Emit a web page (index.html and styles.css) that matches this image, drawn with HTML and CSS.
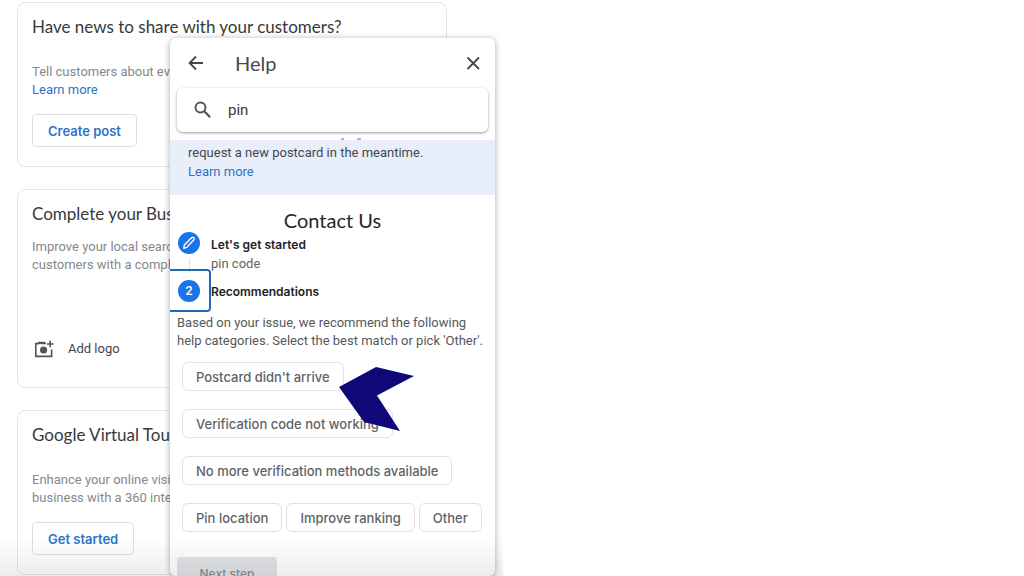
FILE: index.html
```html
<!DOCTYPE html>
<html lang="en">
<head>
<meta charset="utf-8">
<meta name="viewport" content="width=device-width, initial-scale=1">
<title>Business Profile Help</title>
<link rel="stylesheet" href="styles.css">
</head>
<body>
<div class="screen">
  <main class="cards">
    <section class="card card-news">
      <h2 class="card-title">Have news to share with your customers?</h2>
      <p class="card-text">Tell customers about eve<br><a class="link" href="#">Learn more</a></p>
      <button class="btn" type="button">Create post</button>
    </section>
    <section class="card card-profile">
      <h2 class="card-title">Complete your Bus</h2>
      <p class="card-text">Improve your local searc<br>customers with a comple</p>
      <button class="add-logo" type="button">
        <svg width="20" height="18" viewBox="0 0 20 18" fill="none" stroke="#505357" stroke-width="1.6" aria-hidden="true">
          <path d="M12 3.4H7.2L5.6 2.6 4.6 3.6H1.8v12.8h15.8V9.5"/><path d="M4 2.8h7" stroke-width="2"/>
          <circle cx="9.6" cy="10" r="3.6" fill="#505357" stroke="none"/>
          <path d="M16.2.8v6.4M13 4h6.4"/>
        </svg>
        Add logo
      </button>
    </section>
    <section class="card card-tour">
      <h2 class="card-title">Google Virtual Tour</h2>
      <p class="card-text">Enhance your online visib<br>business with a 360 inter</p>
      <button class="btn" type="button">Get started</button>
    </section>
  </main>

  <aside class="help">
    <header class="help-head">
      <button class="icon-btn" type="button" aria-label="Back">
        <svg width="16" height="16" viewBox="0 0 16 16" fill="none" stroke="#444746" stroke-width="1.8"><path d="M15 8H2M8 1.500 1.600 8 8 14.500"/></svg>
      </button>
      <h1 class="help-title">Help</h1>
      <button class="icon-btn" type="button" aria-label="Close">
        <svg width="16" height="16" viewBox="0 0 16 16" fill="none" stroke="#444746" stroke-width="1.8"><path d="m2.500 2.500 11.500 11.500M14 2.500 2.500 14"/></svg>
      </button>
    </header>
    <label class="search">
      <svg width="18" height="18" viewBox="0 0 18 18" fill="none" stroke="#505357" aria-hidden="true"><circle cx="6.500" cy="6.500" r="5" stroke-width="1.900"/><path d="m10.200 10.200 6 6" stroke-width="2.200"/></svg>
      <input class="search-input" type="text" value="pin" aria-label="Search help">
    </label>
    <div class="notice">
      <svg class="notice-edge" width="24" height="2" viewBox="0 0 24 2" fill="none" stroke="#6a6e74" aria-hidden="true"><path d="M1 1h3M17 1h4"/></svg>
      <p class="notice-text">request a new postcard in the meantime.<br><a class="link" href="#">Learn more</a></p>
    </div>
    <div class="contact">
      <h2 class="contact-title">Contact Us</h2>
      <ol class="steps">
        <li class="step">
          <span class="rail"><span class="dot"><svg width="22" height="22" viewBox="0 0 22 22" fill="none" stroke="#fff" stroke-width="1.4" stroke-linejoin="round" aria-hidden="true"><path d="m5.800 16.200.5-3.200 7.500-7.400q1-.8 2 .1.9 1 .1 2L8.800 15.400Z"/></svg></span></span>
          <span class="step-body"><strong class="step-name">Let's get started</strong><span class="step-note">pin code</span></span>
        </li>
        <li class="step">
          <span class="rail rail-focus"><span class="dot">2</span></span>
          <span class="step-body"><strong class="step-name">Recommendations</strong></span>
        </li>
      </ol>
      <p class="intro">Based on your issue, we recommend the following<br>help categories. Select the best match or pick 'Other'.</p>
      <div class="chips">
        <div class="chip-row"><button class="chip" type="button">Postcard didn't arrive</button></div>
        <div class="chip-row"><button class="chip" type="button">Verification code not working</button></div>
        <div class="chip-row"><button class="chip" type="button">No more verification methods available</button></div>
        <div class="chip-row"><button class="chip" type="button">Pin location</button><button class="chip" type="button">Improve ranking</button><button class="chip" type="button">Other</button></div>
      </div>
      <button class="next" type="button" disabled>Next step</button>
    </div>
  </aside>
  <svg class="pointer" width="76" height="66" viewBox="0 0 76 66" aria-hidden="true"><path d="M0 21 37 1l38 9-37 19.500L61 65l-36-9Z" fill="#100878"/></svg>
  <div class="fade"></div>
</div>
</body>
</html>
```
FILE: styles.css
```css
* { box-sizing: border-box; }
body {
  margin: 0;
  background: #fff;
  font: 13px/18px Roboto, "Liberation Sans", sans-serif;
  color: #5f6368;
}
h1, h2, p, ol { margin: 0; padding: 0; }
button, input { font: inherit; color: inherit; }
button { padding: 0; border: 0; background: none; }
.link { color: #2c73c9; text-decoration: none; }
.screen {
  position: relative;
  width: 49.1%;
  min-width: 503px;
  height: 100vh;
  overflow: hidden;
}
.cards {
  display: flex;
  flex-direction: column;
  gap: 22px;
  padding: 2px 56px 0 17px;
}
.card {
  display: flex;
  flex-direction: column;
  align-items: flex-start;
  padding: 12px 14px 19px;
  border: 1px solid #e4e5e7;
  border-radius: 8px;
}
.card-title {
  font: 400 17px/24px Lato, sans-serif;
  color: #37393c;
  white-space: nowrap;
}
.card-text { color: #85888c; white-space: nowrap; }
.card-news .card-text, .card-tour .card-text { margin: 24px 0 15px; }
.card-profile { padding-bottom: 26px; }
.card-profile .card-text { margin: 12px 0 63px; }
.btn {
  height: 33px;
  padding: 0 15px;
  border: 1px solid #dcdee1;
  border-radius: 4px;
  font: 600 13px/18px Inter, sans-serif;
  color: #2c73c9;
}
.add-logo { display: flex; align-items: center; gap: 14px; height: 24px; color: #44474a; padding-left: 2px; }

.help {
  position: absolute;
  top: 38px;
  left: 170px;
  right: 8px;
  bottom: 0;
  overflow: hidden;
  background: #fff;
  border-radius: 6px;
  box-shadow: 0 1px 6px rgba(0, 0, 0, .35);
}
.help-head { display: flex; align-items: center; height: 50px; padding: 0 14px 0 18px; }
.icon-btn { display: flex; }
.help-title {
  flex: 1;
  padding-left: 31px;
  font: 400 20px/26px Lato, sans-serif;
  color: #46494c;
}
.search {
  display: flex;
  align-items: center;
  gap: 16px;
  height: 44px;
  margin: 0 7px 6px;
  padding: 0 17px;
  border-radius: 6px;
  box-shadow: 0 1px 3px rgba(0, 0, 0, .4);
}
.search-input {
  flex: 1;
  min-width: 0;
  padding: 0;
  border: 0;
  outline: 0;
  background: none;
  font-size: 15px;
  color: #37393c;
}
.notice-edge { display: block; margin-left: 170px; }
.notice-text {
  padding: 3px 18px 14px;
  background: #e8effb;
  line-height: 19px;
  color: #44474a;
  white-space: nowrap;
}
.contact { padding-top: 12px; }
.contact-title {
  font: 400 20px/26px Lato, sans-serif;
  text-align: center;
  color: #252729;
}
.steps { margin-top: -1px; list-style: none; }
.step { display: flex; height: 47px; }
.rail {
  display: flex;
  flex-direction: column;
  align-items: center;
  width: 38px;
}
.rail::after { content: ""; width: 1px; height: 14px; margin-top: 4px; background: #e0e1e3; }
.dot {
  display: flex;
  align-items: center;
  justify-content: center;
  width: 22px;
  height: 22px;
  border-radius: 50%;
  background: #1a73e8;
  color: #fff;
  font-weight: 500;
}
.rail-focus {
  justify-content: center;
  width: 41px;
  height: 43px;
  margin-top: -10px;
  padding-right: 1px;
  border: 2px solid #2468b8;
  border-left: 0;
  border-radius: 0 4px 4px 0;
}
.rail-focus::after { display: none; }
.step-body { display: flex; flex-direction: column; padding: 2px 0 0 3px; }
.rail-focus + .step-body { padding-left: 0; }
.step-name { font: 600 12px/22px Inter, sans-serif; color: #202124; }
.step-note { line-height: 15px; }
.intro { margin-top: -12px; padding-left: 7px; color: #55585c; white-space: nowrap; }
.chips { display: flex; flex-direction: column; gap: 18px; padding: 12px 10px 25px 12px; }
.chip-row { display: flex; gap: 4px; }
.chip {
  height: 29px;
  padding: 0 13px;
  border: 1px solid #e0e1e3;
  border-radius: 6px;
  font: 500 13px/18px Inter, sans-serif;
  color: #5f6368;
  white-space: nowrap;
}
.next {
  width: 100px;
  height: 33px;
  margin-left: 7px;
  border-radius: 3px;
  background: #e2e3e6;
  font: 500 12px/18px Inter, sans-serif;
  color: #8b8e92;
}
.pointer { position: absolute; top: 366px; left: 339px; }
.fade {
  position: absolute;
  inset: auto 0 0;
  height: 40px;
  background: linear-gradient(rgba(0, 0, 0, 0), rgba(0, 0, 0, .07));
  pointer-events: none;
}
```
